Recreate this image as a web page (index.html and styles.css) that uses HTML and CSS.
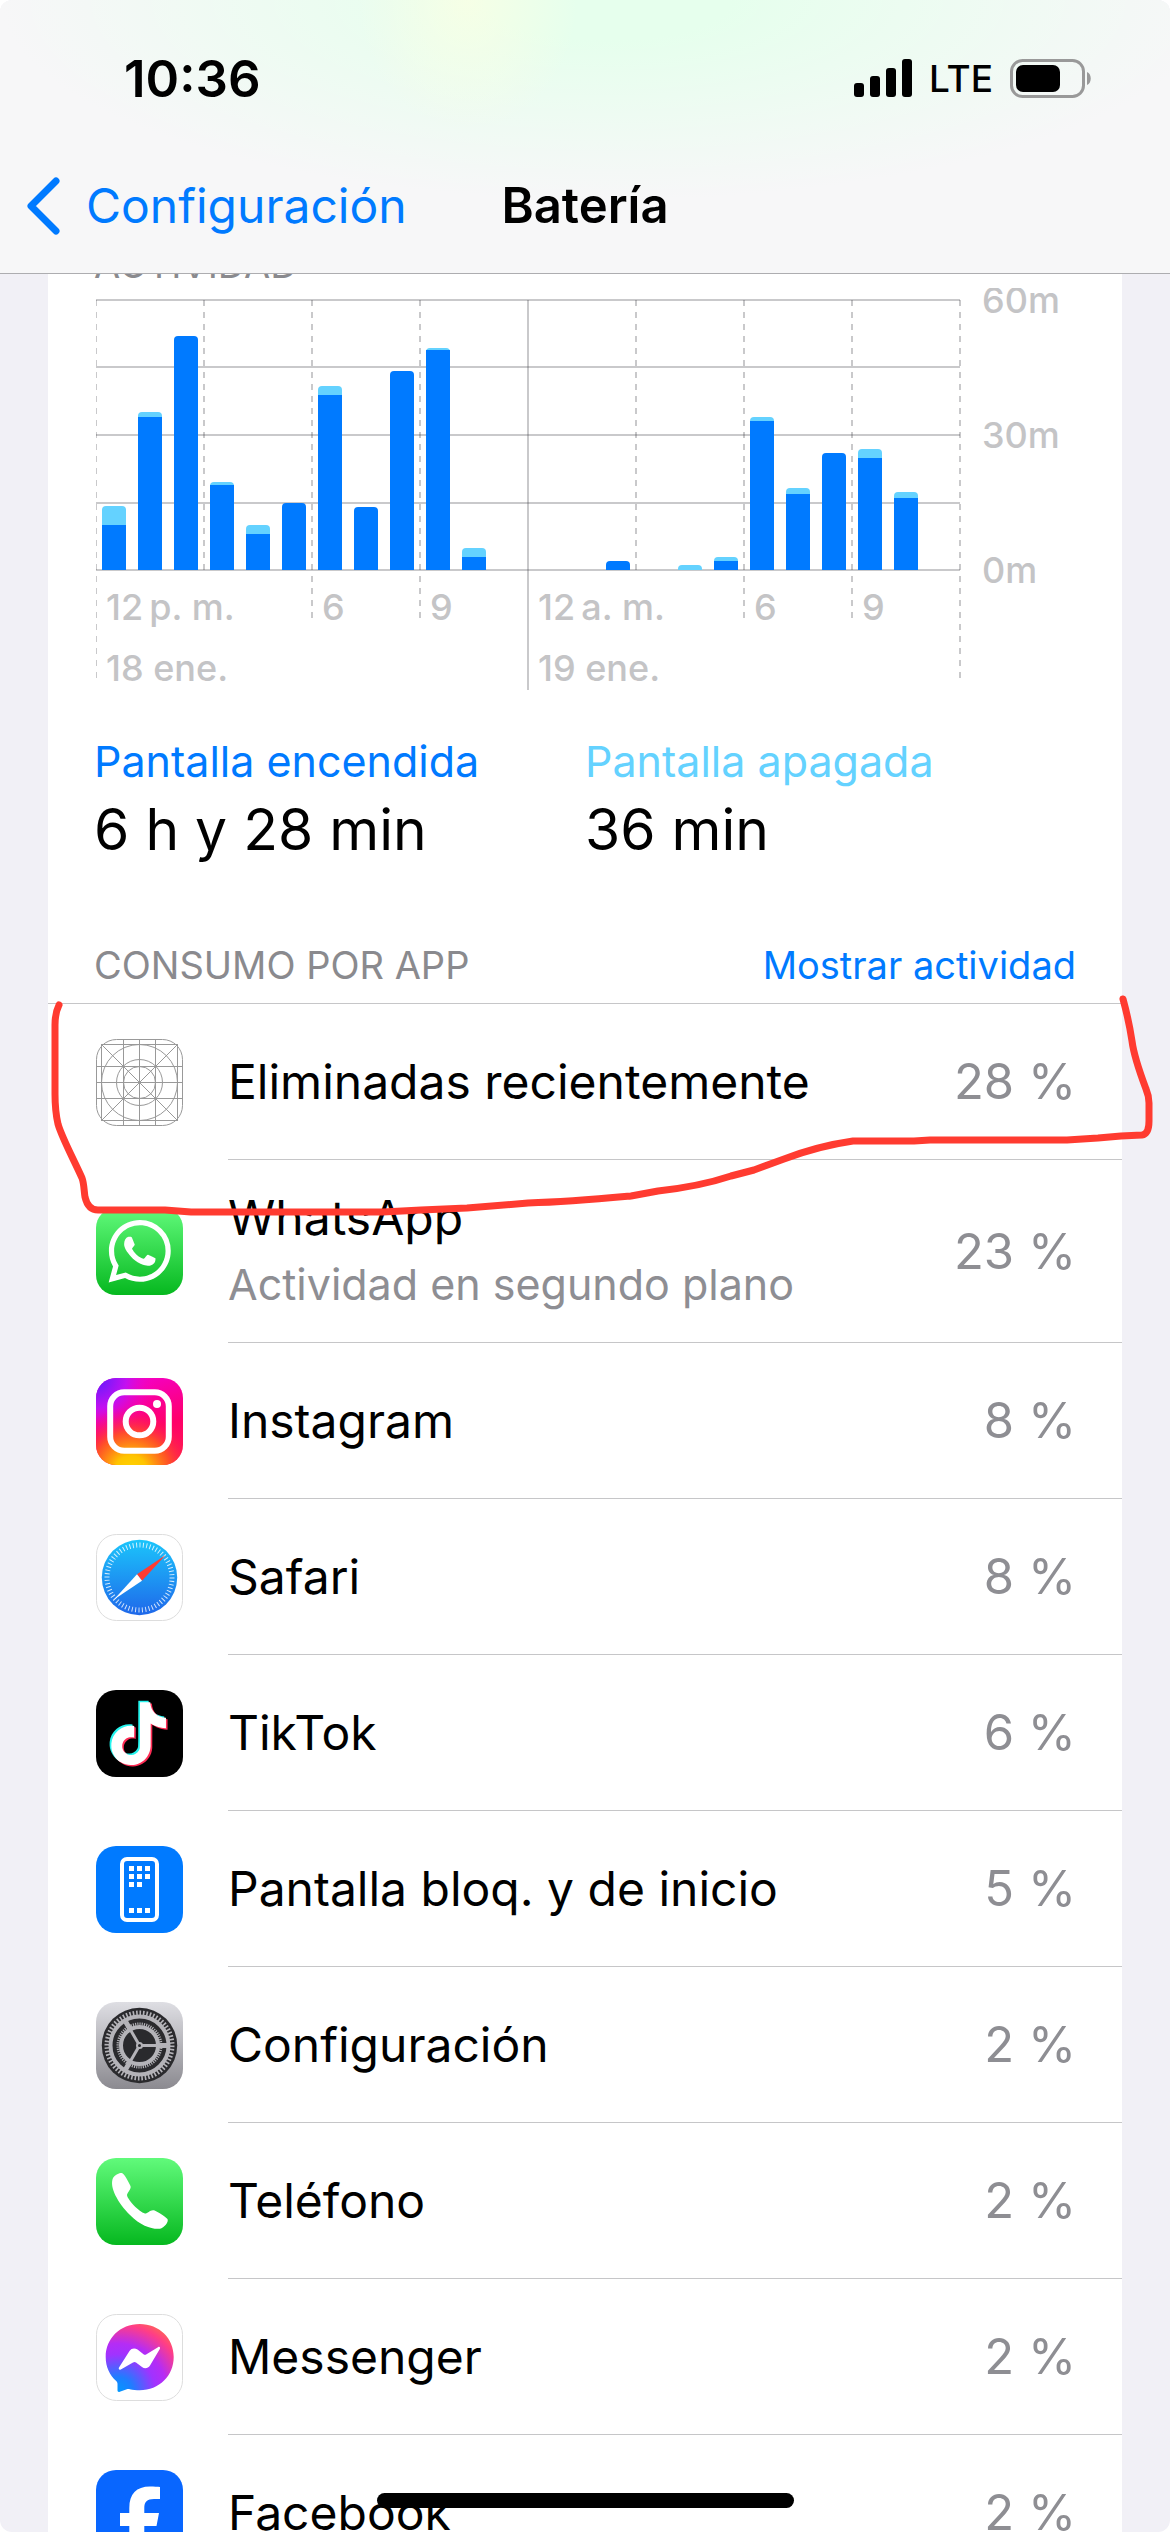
FILE: index.html
```html
<!DOCTYPE html>
<html lang="es">
<head>
  <meta charset="UTF-8" />
  <meta name="viewport" content="width=device-width, initial-scale=1.0"/>
  <title>Batería</title>
  <link rel="stylesheet" href="styles.css">
</head>
<body>

<div class="screen">
  <header class="header">
    <div class="status-bar">
      <span class="time">10:36</span>
      <div class="status-icons">
        <svg class="signal" viewBox="0 0 58 38" aria-hidden="true">
          <rect x="0" y="24" width="10" height="14" rx="3"/>
          <rect x="16" y="17" width="10" height="21" rx="3"/>
          <rect x="32" y="9" width="10" height="29" rx="3"/>
          <rect x="48" y="0" width="10" height="38" rx="3"/>
        </svg>
        <span class="network">LTE</span>
        <svg class="battery" viewBox="0 0 82 39" aria-hidden="true">
          <rect x="1.5" y="1.5" width="72" height="36" rx="11" fill="none" stroke="#999" stroke-width="3"/>
          <rect x="6" y="6" width="44" height="27" rx="7"/>
          <path d="M77 13c5 2 5 11 0 13z" fill="#999"/>
        </svg>
      </div>
    </div>
    <nav class="nav-bar">
      <a href="#" class="back">
        <svg class="chevron" viewBox="0 0 34 58" aria-hidden="true">
          <path d="M30 4L5 29l25 25" fill="none" stroke="#007aff" stroke-width="7" stroke-linecap="round" stroke-linejoin="round"/>
        </svg>
        Configuración
      </a>
      <h1 class="title">Batería</h1>
    </nav>
  </header>

  <main class="content">
    <section class="card">
      <h2 class="section-label chart-label">ACTIVIDAD</h2>

      <svg class="chart" viewBox="0 0 978 402" role="img" aria-label="Actividad por hora">
        <!-- horizontal grid -->
        <path class="grid" d="M0 12H864M0 79H864M0 147H864M0 215H864M0 282H864"/>
        <!-- hour lines -->
        <path class="grid dashed" d="M0 12V396M108 12V282M216 12V336M324 12V336M540 12V282M648 12V336M756 12V336M864 12V396"/>
        <path class="grid" d="M432 12V402"/>

        <!-- screen off -->
        <g class="bar-off">
          <path d="M6 282v-60q0-4 4-4h16q4 0 4 4v60z"/>
          <path d="M42 282v-154q0-4 4-4h16q4 0 4 4v154z"/>
          <path d="M114 282v-84q0-4 4-4h16q4 0 4 4v84z"/>
          <path d="M150 282v-41q0-4 4-4h16q4 0 4 4v41z"/>
          <path d="M222 282v-180q0-4 4-4h16q4 0 4 4v180z"/>
          <path d="M330 282v-218q0-4 4-4h16q4 0 4 4v218z"/>
          <path d="M366 282v-18q0-4 4-4h16q4 0 4 4v18z"/>
          <path d="M582 282v-1q0-4 4-4h16q4 0 4 4v1z"/>
          <path d="M618 282v-9q0-4 4-4h16q4 0 4 4v9z"/>
          <path d="M654 282v-149q0-4 4-4h16q4 0 4 4v149z"/>
          <path d="M690 282v-78q0-4 4-4h16q4 0 4 4v78z"/>
          <path d="M762 282v-117q0-4 4-4h16q4 0 4 4v117z"/>
          <path d="M798 282v-74q0-4 4-4h16q4 0 4 4v74z"/>
        </g>
        <!-- screen on -->
        <g class="bar-on">
          <rect x="6" y="237" width="24" height="45"/>
          <rect x="42" y="129" width="24" height="153"/>
          <path d="M78 282v-230q0-4 4-4h16q4 0 4 4v230z"/>
          <rect x="114" y="197" width="24" height="85"/>
          <rect x="150" y="246" width="24" height="36"/>
          <path d="M186 282v-63q0-4 4-4h16q4 0 4 4v63z"/>
          <rect x="222" y="107" width="24" height="175"/>
          <path d="M258 282v-59q0-4 4-4h16q4 0 4 4v59z"/>
          <path d="M294 282v-195q0-4 4-4h16q4 0 4 4v195z"/>
          <rect x="330" y="62" width="24" height="220"/>
          <rect x="366" y="269" width="24" height="13"/>
          <path d="M510 282v-5q0-4 4-4h16q4 0 4 4v5z"/>
          <rect x="618" y="273" width="24" height="9"/>
          <rect x="654" y="133" width="24" height="149"/>
          <rect x="690" y="206" width="24" height="76"/>
          <path d="M726 282v-113q0-4 4-4h16q4 0 4 4v113z"/>
          <rect x="762" y="170" width="24" height="112"/>
          <rect x="798" y="210" width="24" height="72"/>
        </g>

        <g class="axis">
          <text x="886" y="25">60m</text>
          <text x="886" y="160">30m</text>
          <text x="886" y="295">0m</text>
          <text x="10" y="332">12&#8201;p. m.</text>
          <text x="226" y="332">6</text>
          <text x="334" y="332">9</text>
          <text x="442" y="332">12&#8201;a. m.</text>
          <text x="658" y="332">6</text>
          <text x="766" y="332">9</text>
          <text x="10" y="393">18 ene.</text>
          <text x="442" y="393">19 ene.</text>
        </g>
      </svg>

      <div class="totals">
        <div class="total on">
          <p class="total-label">Pantalla encendida</p>
          <p class="total-value">6 h y 28 min</p>
        </div>
        <div class="total off">
          <p class="total-label">Pantalla apagada</p>
          <p class="total-value">36 min</p>
        </div>
      </div>

      <div class="list-header">
        <h2 class="section-label">CONSUMO POR APP</h2>
        <button type="button" class="link-btn">Mostrar actividad</button>
      </div>

      <ul class="app-list">
        <li class="app">
          <svg class="app-icon" viewBox="0 0 87 87" aria-hidden="true">
            <g fill="none" stroke="#999" stroke-width="1">
              <rect x="0.5" y="0.5" width="86" height="86" rx="20"/>
              <path d="M5.5 5v77M27.5 0v87M43.5 0v87M59.5 0v87M81.5 5v77M5 5.5h77M0 27.5h87M0 43.5h87M0 59.5h87M5 81.5h77M5.5 5.5l76 76M81.5 5.5l-76 76"/>
              <circle cx="43.5" cy="43.5" r="38"/>
              <circle cx="43.5" cy="43.5" r="23"/>
              <circle cx="43.5" cy="43.5" r="16"/>
            </g>
          </svg>
          <div class="app-body">
            <p class="app-name">Eliminadas recientemente</p>
            <span class="percent">28 %</span>
          </div>
        </li>
        <li class="app">
          <svg class="app-icon" viewBox="0 0 87 87" aria-hidden="true">
            <defs>
              <linearGradient id="green" x1="0" y1="0" x2="0" y2="1">
                <stop offset="0" stop-color="#61fa7b"/>
                <stop offset="1" stop-color="#06b81f"/>
              </linearGradient>
            </defs>
            <rect width="87" height="87" rx="20" fill="url(#green)"/>
            <path transform="translate(12.5 12) scale(2.6)" fill="#fff" d="M17.472 14.382c-.297-.149-1.758-.867-2.03-.967-.273-.099-.471-.148-.67.15-.197.297-.767.966-.94 1.164-.173.199-.347.223-.644.075-.297-.15-1.255-.463-2.39-1.475-.883-.788-1.48-1.761-1.653-2.059-.173-.297-.018-.458.13-.606.134-.133.298-.347.446-.52.149-.174.198-.298.298-.497.099-.198.05-.371-.025-.52-.075-.149-.669-1.612-.916-2.207-.242-.579-.487-.5-.669-.51-.173-.008-.371-.01-.57-.01-.198 0-.52.074-.792.372-.272.297-1.04 1.016-1.04 2.479 0 1.462 1.065 2.875 1.213 3.074.149.198 2.096 3.2 5.077 4.487.709.306 1.262.489 1.694.625.712.227 1.36.195 1.871.118.571-.085 1.758-.719 2.006-1.413.248-.694.248-1.289.173-1.413-.074-.124-.272-.198-.57-.347m-5.421 7.403h-.004a9.87 9.87 0 01-5.031-1.378l-.361-.214-3.741.982.998-3.648-.235-.374a9.86 9.86 0 01-1.51-5.26c.001-5.45 4.436-9.884 9.888-9.884 2.64 0 5.122 1.03 6.988 2.898a9.825 9.825 0 012.893 6.994c-.003 5.45-4.437 9.884-9.885 9.884m8.413-18.297A11.815 11.815 0 0012.05 0C5.495 0 .16 5.335.157 11.892c0 2.096.547 4.142 1.588 5.945L.057 24l6.305-1.654a11.882 11.882 0 005.683 1.448h.005c6.554 0 11.89-5.335 11.893-11.893a11.821 11.821 0 00-3.48-8.413Z"/>
          </svg>
          <div class="app-body">
            <div class="app-text">
              <p class="app-name">WhatsApp</p>
              <p class="app-note">Actividad en segundo plano</p>
            </div>
            <span class="percent">23 %</span>
          </div>
        </li>
        <li class="app">
          <svg class="app-icon" viewBox="0 0 87 87" aria-hidden="true">
            <defs>
              <radialGradient id="ig-yellow" cx="0.4" cy="1.08" r="0.75">
                <stop offset="0" stop-color="#ffd500"/>
                <stop offset="0.25" stop-color="#ffc400"/>
                <stop offset="0.6" stop-color="#ff5b1e" stop-opacity="0.85"/>
                <stop offset="1" stop-color="#ff0069" stop-opacity="0"/>
              </radialGradient>
              <radialGradient id="ig-purple" cx="0" cy="0" r="0.7">
                <stop offset="0" stop-color="#5a1cff"/>
                <stop offset="0.5" stop-color="#c310f0"/>
                <stop offset="1" stop-color="#ff00b8" stop-opacity="0"/>
              </radialGradient>
              <linearGradient id="ig-pink" x1="0.4" y1="0" x2="0.7" y2="1">
                <stop offset="0" stop-color="#f400c8"/>
                <stop offset="0.6" stop-color="#ff0069"/>
                <stop offset="1" stop-color="#ff1a50"/>
              </linearGradient>
            </defs>
            <rect width="87" height="87" rx="20" fill="url(#ig-pink)"/>
            <rect width="87" height="87" rx="20" fill="url(#ig-purple)"/>
            <rect width="87" height="87" rx="20" fill="url(#ig-yellow)"/>
            <rect x="14.2" y="14.2" width="58.6" height="58.6" rx="14" fill="none" stroke="#fff" stroke-width="6"/>
            <circle cx="43.5" cy="43.5" r="13.8" fill="none" stroke="#fff" stroke-width="6"/>
            <circle cx="61" cy="26" r="4" fill="#fff"/>
          </svg>
          <div class="app-body">
            <p class="app-name">Instagram</p>
            <span class="percent">8 %</span>
          </div>
        </li>
        <li class="app">
          <svg class="app-icon" viewBox="0 0 87 87" aria-hidden="true">
            <defs>
              <linearGradient id="safari" x1="0" y1="0" x2="0" y2="1">
                <stop offset="0" stop-color="#1bc5fb"/>
                <stop offset="1" stop-color="#1f68ea"/>
              </linearGradient>
            </defs>
            <rect x="0.5" y="0.5" width="86" height="86" rx="20" fill="#fff" stroke="#ddd"/>
            <circle cx="43.5" cy="43.5" r="37.7" fill="url(#safari)"/>
            <circle cx="43.5" cy="43.5" r="32.5" fill="none" stroke="#fff" stroke-opacity="0.8" stroke-width="5" stroke-dasharray="1 2.4" pathLength="204"/>
            <path d="M69.7 21L41 40.3l5 6.4z" fill="#ff3b30"/>
            <path d="M18 65.5l23-25.2 5 6.4z" fill="#fff"/>
          </svg>
          <div class="app-body">
            <p class="app-name">Safari</p>
            <span class="percent">8 %</span>
          </div>
        </li>
        <li class="app">
          <svg class="app-icon" viewBox="0 0 87 87" aria-hidden="true">
            <defs>
              <path id="note" d="M12.525.02c1.31-.02 2.61-.01 3.91-.02.08 1.53.63 3.09 1.75 4.17 1.12 1.11 2.7 1.62 4.24 1.79v4.03c-1.44-.05-2.89-.35-4.2-.97-.57-.26-1.1-.59-1.62-.93-.01 2.92.01 5.84-.02 8.75-.08 1.4-.54 2.79-1.35 3.94-1.31 1.92-3.58 3.17-5.91 3.21-1.43.08-2.86-.31-4.08-1.03-2.02-1.19-3.44-3.37-3.65-5.71-.02-.5-.03-1-.01-1.49.18-1.9 1.12-3.72 2.58-4.96 1.66-1.44 3.98-2.13 6.15-1.72.02 1.48-.04 2.96-.04 4.44-.99-.32-2.15-.23-3.02.37-.63.41-1.11 1.04-1.36 1.75-.21.51-.15 1.07-.14 1.61.24 1.64 1.82 3.02 3.5 2.87 1.12-.01 2.19-.66 2.77-1.61.19-.33.4-.67.41-1.06.1-1.79.06-3.57.07-5.36.01-4.03-.01-8.05.02-12.07z"/>
            </defs>
            <rect width="87" height="87" rx="20"/>
            <use href="#note" transform="translate(9.5 10.8) scale(2.62)" fill="#25f4ee"/>
            <use href="#note" transform="translate(12.8 13.6) scale(2.62)" fill="#fe2c55"/>
            <use href="#note" transform="translate(11.2 12.2) scale(2.62)" fill="#fff"/>
          </svg>
          <div class="app-body">
            <p class="app-name">TikTok</p>
            <span class="percent">6 %</span>
          </div>
        </li>
        <li class="app">
          <svg class="app-icon" viewBox="0 0 87 87" aria-hidden="true">
            <rect width="87" height="87" rx="20" fill="#007aff"/>
            <rect x="26" y="13" width="35" height="61" rx="5" fill="none" stroke="#fff" stroke-width="4"/>
            <path fill="#fff" d="M33 20h5v5h-5zM41 20h5v5h-5zM49 20h5v5h-5zM33 28h5v5h-5zM41 28h5v5h-5zM49 28h5v5h-5zM33 36h5v5h-5zM41 36h5v5h-5zM33 62h5v5h-5zM41 62h5v5h-5zM49 62h5v5h-5z"/>
          </svg>
          <div class="app-body">
            <p class="app-name">Pantalla bloq. y de inicio</p>
            <span class="percent">5 %</span>
          </div>
        </li>
        <li class="app">
          <svg class="app-icon" viewBox="0 0 87 87" aria-hidden="true">
            <defs>
              <linearGradient id="metal" x1="0" y1="0" x2="0" y2="1">
                <stop offset="0" stop-color="#dedee3"/>
                <stop offset="1" stop-color="#8b8a90"/>
              </linearGradient>
            </defs>
            <rect width="87" height="87" rx="20" fill="url(#metal)"/>
            <circle cx="43.5" cy="43.5" r="37.7" fill="#2a2a2d"/>
            <g fill="none" stroke="#b4b3b8">
              <circle cx="43.5" cy="43.5" r="32.5" stroke-width="5" stroke-dasharray="1.6 1.8" pathLength="204"/>
              <circle cx="43.5" cy="43.5" r="29" stroke-width="4"/>
              <circle cx="43.5" cy="43.5" r="21.5" stroke-width="3" stroke-dasharray="1.2 1.2" pathLength="144"/>
              <circle cx="43.5" cy="43.5" r="18.5" stroke-width="4"/>
              <path d="M43.5 43.5H70" stroke-width="3"/>
              <path d="M43.5 43.5L30.2 20.5M43.5 43.5L30.2 66.5" stroke-width="3"/>
              <path d="M62 43.5h9M34.2 27.5l-4.5-7.8M34.2 59.5l-4.5 7.8" stroke-width="5"/>
            </g>
            <circle cx="43.5" cy="43.5" r="3.5" fill="#b4b3b8"/>
            <circle cx="43.5" cy="43.5" r="1.5" fill="#2a2a2d"/>
          </svg>
          <div class="app-body">
            <p class="app-name">Configuración</p>
            <span class="percent">2 %</span>
          </div>
        </li>
        <li class="app">
          <svg class="app-icon" viewBox="0 0 87 87" aria-hidden="true">
            <rect width="87" height="87" rx="20" fill="url(#green)"/>
            <path fill="#fff" d="M17 20c2-3 6-5.500 9-5 2.500 1 6 8 8.500 13 1 3-3 6-3.500 9 0 4 12 17 18 18.500 3 0 5-4 9-3.200 4 1.700 11 6.200 13.500 8.700 1.500 3-3.500 9-7.500 9.700-8 .8-19-2.700-30-13.700C22 45 13 29 17 20z"/>
          </svg>
          <div class="app-body">
            <p class="app-name">Teléfono</p>
            <span class="percent">2 %</span>
          </div>
        </li>
        <li class="app">
          <svg class="app-icon" viewBox="0 0 87 87" aria-hidden="true">
            <defs>
              <radialGradient id="messenger" cx="0.18" cy="1" r="1.1">
                <stop offset="0" stop-color="#0099ff"/>
                <stop offset="0.2" stop-color="#1f7dff"/>
                <stop offset="0.5" stop-color="#a033ff"/>
                <stop offset="0.65" stop-color="#b52cf5"/>
                <stop offset="0.9" stop-color="#ff3e86"/>
                <stop offset="1" stop-color="#ff5c60"/>
              </radialGradient>
            </defs>
            <rect x="0.5" y="0.5" width="86" height="86" rx="20" fill="#fff" stroke="#ddd"/>
            <path fill="url(#messenger)" d="M43.700 10C24 10 9.700 24.500 9.700 43c0 10 4 18 10.500 24 1 1 1.300 2 1.300 3.200v6c0 1.500 1 2 2.300 1.500l7-2.500c1-.4 2-.4 3 0 3 .7 6.500 1 9.900 1 19.700 0 34-14.500 34-33.200S63.400 10 43.700 10z"/>
            <path fill="#fff" d="M23 53.500l10.500-16.500c2-3 5.500-3.200 8-1.400l6 4.700c1 .7 2 .7 3 0L62 33.200c1.500-1 2.700.3 1.800 1.800L54 51.500c-2 3.200-5.500 3.500-8 1.500l-6-4.500c-1-.8-2-.8-3 0l-12.200 7c-1.500 1-2.600-.500-1.800-2z"/>
          </svg>
          <div class="app-body">
            <p class="app-name">Messenger</p>
            <span class="percent">2 %</span>
          </div>
        </li>
        <li class="app">
          <svg class="app-icon" viewBox="0 0 87 87" aria-hidden="true">
            <rect width="87" height="87" rx="20" fill="#0866ff"/>
            <path fill="#fff" d="M64 17v12h-6c-7 0-9.700 3-9.700 9v5H63l-2.500 13H48.300v31h-15V56H24V43h9.300v-5c0-14 7-21.500 20.700-21.500 4 0 8 .2 10 .5z"/>
          </svg>
          <div class="app-body">
            <p class="app-name">Facebook</p>
            <span class="percent">2 %</span>
          </div>
        </li>
        <li class="marker" aria-hidden="true">
          <svg viewBox="48 1003 1074 339">
            <path d="M59 1004Q55 1012 55 1024V1093Q55 1110 58 1123C62 1137 74 1159 82 1177C84 1182 84 1190 85 1196Q88 1209 98 1209H165L191 1211H383L421 1209L467 1207L528 1202C570 1201 610 1197 631 1195L658 1190C685 1187 710 1182 731 1175L754 1169L784 1158C805 1150 825 1144 853 1140H914L930 1139H1067L1098 1137L1121 1135L1142 1134Q1149 1133 1149 1120V1102Q1149 1095 1146 1088C1140 1072 1134 1056 1132 1040Q1129 1020 1123 998"/>
          </svg>
        </li>
      </ul>
    </section>
  </main>

  <div class="home-indicator"></div>
</div>

</body>
</html>
```

FILE: styles.css
```css
* {
  box-sizing: border-box;
}

body {
  font-family: Inter, 'Liberation Sans', sans-serif;
  margin: 0;
  background: #fff;
  color: #000;
}

h1, h2, p, ul {
  margin: 0;
  padding: 0;
}

.screen {
  display: flex;
  flex-direction: column;
  height: 100vh;
  overflow: hidden;
  position: relative;
  background: #f1f0f6;
  border-radius: 12px;
}

/* Header */
.header {
  flex: none;
  border-bottom: 1px solid #adadb0;
  background:
    radial-gradient(ellipse 110px 130px at 40% 0, rgba(250, 255, 228, 0.8), transparent),
    radial-gradient(ellipse 52% 200px at 52% 0, #e6ffed 20%, transparent),
    #f7f7f8;
}

.status-bar {
  display: flex;
  justify-content: space-between;
  align-items: center;
  height: 138px;
  padding: 18px 78px 0 124px;
}

.time {
  font-size: 51px;
  font-weight: 600;
}

.status-icons {
  display: flex;
  align-items: center;
  gap: 17px;
}

.signal {
  width: 58px;
  height: 38px;
}

.network {
  font-size: 37px;
  font-weight: 500;
}

.battery {
  width: 82px;
  height: 39px;
}

.nav-bar {
  display: grid;
  grid-template-columns: 1fr auto 1fr;
  align-items: center;
  height: 135px;
  padding: 0 26px;
}

.back {
  display: flex;
  align-items: center;
  gap: 26px;
  color: #007aff;
  font-size: 48px;
  text-decoration: none;
}

.chevron {
  width: 34px;
  height: 58px;
}

.title {
  font-size: 49px;
  font-weight: 600;
}

/* Scrolling area */
.content {
  flex: 1;
  min-height: 0;
  overflow: hidden;
}

.card {
  margin: 0 48px;
  background: #fff;
}

.section-label {
  color: #8a8a8e;
  font-size: 38px;
  font-weight: 400;
  line-height: 48px;
}

.chart-label {
  margin-top: -34px;
  padding-left: 46px;
}

.chart {
  display: block;
  width: 100%;
  padding: 0 48px;
}

.grid {
  fill: none;
  stroke: #3c3c43;
  stroke-opacity: 0.28;
  stroke-width: 2;
}

.dashed {
  stroke-dasharray: 6 6;
}

.bar-on {
  fill: #007aff;
}

.bar-off {
  fill: #64d2ff;
}

.axis {
  fill: #c4c4c6;
  font-size: 36px;
  font-weight: 500;
}

.totals {
  display: grid;
  grid-template-columns: 1fr 1fr;
  padding: 44px 46px 75px;
}

.total-label {
  font-size: 43px;
  line-height: 54px;
}

.on .total-label {
  color: #007aff;
}

.off .total-label {
  color: #64d2ff;
}

.total-value {
  margin-top: 6px;
  font-size: 57px;
  line-height: 72px;
}

.list-header {
  display: flex;
  justify-content: space-between;
  align-items: center;
  padding: 0 46px 14px;
}

.link-btn {
  padding: 0;
  border: none;
  background: none;
  color: #007aff;
  font-family: inherit;
  font-size: 38px;
  line-height: 48px;
  cursor: pointer;
}

/* App list */
.app-list {
  position: relative;
  list-style: none;
  border-top: 1px solid #c6c6c8;
}

.app {
  display: flex;
  align-items: center;
  gap: 45px;
  padding-left: 48px;
}

.app-icon {
  flex: none;
  width: 87px;
  height: 87px;
}

.app-body {
  flex: 1;
  display: flex;
  justify-content: space-between;
  align-items: center;
  min-height: 156px;
  padding: 28px 46px 28px 0;
  border-bottom: 1px solid #c6c6c8;
}

.app-name {
  font-size: 48px;
  line-height: 60px;
}

.app-note {
  margin-top: 6px;
  color: #8e8e93;
  font-size: 43px;
  line-height: 60px;
}

.percent {
  color: #8e8e93;
  font-size: 49px;
}

/* Red pen mark round the first app */
.marker {
  position: absolute;
  top: 0;
  left: 0;
  width: 100%;
  pointer-events: none;
}

.marker svg {
  display: block;
  width: 100%;
  overflow: visible;
}

.marker path {
  fill: none;
  stroke: #ff3b30;
  stroke-width: 7;
  stroke-linecap: round;
  stroke-linejoin: round;
}

.home-indicator {
  position: absolute;
  bottom: 24px;
  left: 50%;
  width: 417px;
  height: 15px;
  margin-left: -208px;
  background: #000;
  border-radius: 8px;
}
```
